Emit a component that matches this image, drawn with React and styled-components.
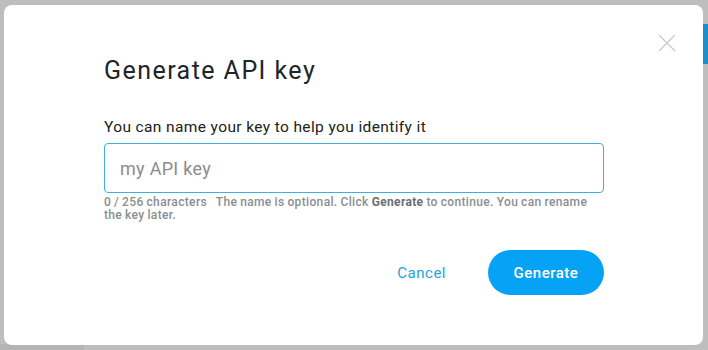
import React from 'react'
import styled, { createGlobalStyle } from 'styled-components'

const GlobalStyle = createGlobalStyle`
  html, body {
    margin: 0;
    padding: 0;
    width: 708px;
    height: 350px;
    overflow: hidden;
    background: #bebebe;
    font-family: Roboto, "Liberation Sans", Arial, sans-serif;
  }
`

// dimmed page behind the modal
const Overlay = styled.div`
  position: relative;
  display: flex;
  align-items: flex-start;
  justify-content: flex-start;
  box-sizing: border-box;
  width: 708px;
  height: 350px;
  padding: 5px 5px 5px 4px;
  background: #bebebe;
`

const SideTab = styled.div`
  position: absolute;
  right: 0;
  top: 24px;
  width: 6px;
  height: 40px;
  background: #1a8fce;
`

const BottomShade = styled.div`
  position: absolute;
  left: 0;
  bottom: 0;
  width: 84px;
  height: 6px;
  background: #b4b4b4;
`

const Dialog = styled.div`
  position: relative;
  display: flex;
  flex-direction: column;
  align-items: flex-start;
  width: 699px;
  height: 340px;
  box-sizing: border-box;
  background: #fff;
  border-radius: 8px;
  padding: 50px 100px 0 100px;
`

const Close = styled.button`
  position: absolute;
  top: 29px;
  right: 27px;
  width: 18px;
  height: 18px;
  padding: 0;
  border: 0;
  background: none;
  cursor: pointer;
  svg {
    display: block;
  }
`

const Title = styled.h2`
  margin: 0 0 30px;
  font-size: 25px;
  font-weight: 400;
  line-height: 32px;
  color: #212529;
  letter-spacing: 1.45px;
`

const Field = styled.div`
  display: flex;
  flex-direction: column;
  width: 500px;
`

const Label = styled.label`
  margin: 0 0 6px;
  font-size: 15.5px;
  line-height: 20px;
  color: #212121;
  letter-spacing: 0.38px;
`

const Input = styled.input`
  box-sizing: border-box;
  width: 100%;
  height: 50px;
  padding: 0 15px;
  border: 1px solid #3fb0d9;
  border-radius: 4px;
  font-family: inherit;
  font-size: 18px;
  letter-spacing: 0.3px;
  color: #333;
  outline: none;
  &::placeholder {
    color: #8c8c8c;
  }
`

const Hint = styled.p`
  margin: 3px 0 0;
  width: 490px;
  font-size: 12px;
  line-height: 13px;
  font-weight: 500;
  letter-spacing: 0.35px;
  color: #8a8e92;
  word-spacing: -0.4px;
  b {
    font-weight: 700;
    color: #6a6e72;
  }
`

const Actions = styled.div`
  display: flex;
  justify-content: flex-end;
  align-items: center;
  gap: 42px;
  width: 500px;
  margin-top: 28px;
`

const Button = styled.button`
  height: 45px;
  border: 0;
  border-radius: 23px;
  font-family: inherit;
  font-size: 15px;
  letter-spacing: 0.5px;
  cursor: pointer;
  ${p =>
    p.primary
      ? `
    width: 116px;
    background: #05a2f6;
    color: #fff;
    font-weight: 500;
  `
      : `
    padding: 0;
    background: none;
    color: #22a4e2;
    font-weight: 400;
  `}
`

export default function App() {
  return (
    <>
      <GlobalStyle />
      <Overlay>
        <SideTab />
        <BottomShade />
        <Dialog>
          <Close aria-label="Close">
            <svg width="18" height="18" viewBox="0 0 18 18">
              <path d="M1 1L17 17M17 1L1 17" stroke="#c9c9c9" strokeWidth="1.3" />
            </svg>
          </Close>
          <Title>Generate API key</Title>
          <Field>
            <Label htmlFor="key-name">You can name your key to help you identify it</Label>
            <Input id="key-name" placeholder="my API key" />
            <Hint>
              0 / 256 characters&nbsp;&nbsp;&nbsp;The name is optional. Click <b>Generate</b> to
              continue. You can rename the key later.
            </Hint>
          </Field>
          <Actions>
            <Button>Cancel</Button>
            <Button primary>Generate</Button>
          </Actions>
        </Dialog>
      </Overlay>
    </>
  )
}
